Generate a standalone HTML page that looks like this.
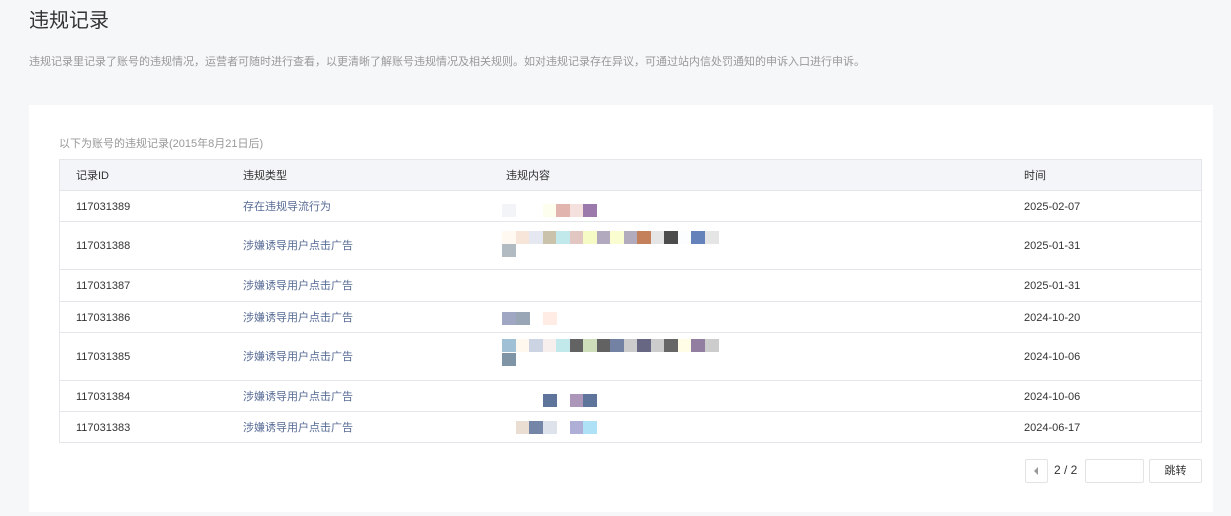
<!DOCTYPE html><html><head><meta charset="utf-8"><style>
*{margin:0;padding:0;box-sizing:border-box}
body{width:1231px;height:516px;background:#f6f7f9;font-family:"Liberation Sans","Noto Sans CJK SC",sans-serif;position:relative;overflow:hidden;color:#333}
.a{position:absolute}
h1{position:absolute;left:29px;top:7px;font-size:20px;font-weight:normal;color:#333;line-height:28px}
.desc{left:29px;top:55px;font-size:11px;color:#999;line-height:14px}
.card{left:29px;top:105px;width:1184px;height:407px;background:#fff}
.note{left:59px;top:137px;font-size:11px;color:#999;line-height:14px}
.tbl{left:59px;top:159px;width:1143px;height:284px;border:1px solid #e5e6ea}
.hd{left:0;top:0;width:100%;height:31px;background:#f4f5f8;border-bottom:1px solid #e5e6ea}
.row{left:0;width:100%;border-bottom:1px solid #e5e6ea}
.c{position:absolute;font-size:11px;color:#333;line-height:14px;white-space:nowrap;margin-top:1px}
.t{color:#576b95}
.sq{position:absolute;width:14px;height:13px}
.btn{position:absolute;border:1px solid #e3e3e3;border-radius:2px;background:#fff}
</style></head><body>
<h1>违规记录</h1>
<div class="a desc">违规记录里记录了账号的违规情况，运营者可随时进行查看，以更清晰了解账号违规情况及相关规则。如对违规记录存在异议，可通过站内信处罚通知的申诉入口进行申诉。</div>
<div class="a card"></div>
<div class="a note">以下为账号的违规记录(2015年8月21日后)</div>
<div class="a tbl">
<div class="a hd"><span class="c" style="left:16px;top:8px">记录ID</span><span class="c" style="left:183px;top:8px">违规类型</span><span class="c" style="left:446px;top:8px">违规内容</span><span class="c" style="left:964px;top:8px">时间</span></div>
<div class="a row" style="top:31px;height:31px"><span class="c" style="left:16px;top:8px">117031389</span><span class="c t" style="left:183px;top:8px">存在违规导流行为</span><span class="c" style="left:964px;top:8px">2025-02-07</span></div>
<div class="a row" style="top:62px;height:48px"><span class="c" style="left:16px;top:16px">117031388</span><span class="c t" style="left:183px;top:16px">涉嫌诱导用户点击广告</span><span class="c" style="left:964px;top:16px">2025-01-31</span></div>
<div class="a row" style="top:110px;height:32px"><span class="c" style="left:16px;top:8px">117031387</span><span class="c t" style="left:183px;top:8px">涉嫌诱导用户点击广告</span><span class="c" style="left:964px;top:8px">2025-01-31</span></div>
<div class="a row" style="top:142px;height:31px"><span class="c" style="left:16px;top:8px">117031386</span><span class="c t" style="left:183px;top:8px">涉嫌诱导用户点击广告</span><span class="c" style="left:964px;top:8px">2024-10-20</span></div>
<div class="a row" style="top:173px;height:48px"><span class="c" style="left:16px;top:16px">117031385</span><span class="c t" style="left:183px;top:16px">涉嫌诱导用户点击广告</span><span class="c" style="left:964px;top:16px">2024-10-06</span></div>
<div class="a row" style="top:221px;height:31px"><span class="c" style="left:16px;top:8px">117031384</span><span class="c t" style="left:183px;top:8px">涉嫌诱导用户点击广告</span><span class="c" style="left:964px;top:8px">2024-10-06</span></div>
<div class="a" style="top:252px;left:0;width:100%;height:31px"><span class="c" style="left:16px;top:8px">117031383</span><span class="c t" style="left:183px;top:8px">涉嫌诱导用户点击广告</span><span class="c" style="left:964px;top:8px">2024-06-17</span></div>
</div>
<div id="sq"></div>
<div class="btn" style="left:1025px;top:459px;width:23px;height:24px"><span class="a" style="left:8px;top:7px;width:0;height:0;border-top:4px solid transparent;border-bottom:4px solid transparent;border-right:4px solid #999"></span></div>
<span class="a" style="left:1054px;top:463px;font-size:12px;color:#333;line-height:14px">2 / 2</span>
<div class="btn" style="left:1085px;top:459px;width:59px;height:24px"></div>
<div class="btn" style="left:1149px;top:459px;width:53px;height:24px;font-size:11px;text-align:center;line-height:22px">跳转</div>
<script>
var rows=[[204,{0:"#f3f4f8",3:"#fefeef",4:"#e2b4ae",5:"#f4e0dc",6:"#9b7aab"}],
[231,["#fff9f2","#f6e5d8","#e5e8f1","#cbc2ab","#c1e8eb","#e2c6c1","#f6fac5","#b2a9bf","#fafdd0","#b2aabd","#c47f5b","#e5e5e5","#4c4c4c","#fbfdff","#6682bb","#e5e5e5"]],
[244,["#b2bbc1"]],
[312,{0:"#9fa7c3",1:"#98a6b6",3:"#ffece5"}],
[339,["#a0c0d6","#fff8ee","#ccd4e3","#f6efee","#c1e8eb","#636363","#cfdeba","#626262","#7381a3","#cccccc","#676784","#cccccc","#666666","#fffde5","#927ea0","#cccccc"]],
[353,["#7f95a5"]],
[394,{3:"#5f749b",5:"#ac97bb",6:"#5f749b"}],
[421,{1:"#eaddd2",2:"#7485a8",3:"#dee2ea",5:"#afaed6",6:"#aee0f6"}]];
var h="";rows.forEach(function(r){for(var k in r[1]){h+='<div class="sq" style="left:'+(502+k*13.5)+'px;top:'+r[0]+'px;background:'+r[1][k]+'"></div>';}});
document.getElementById("sq").innerHTML=h;
</script>
</body></html>
